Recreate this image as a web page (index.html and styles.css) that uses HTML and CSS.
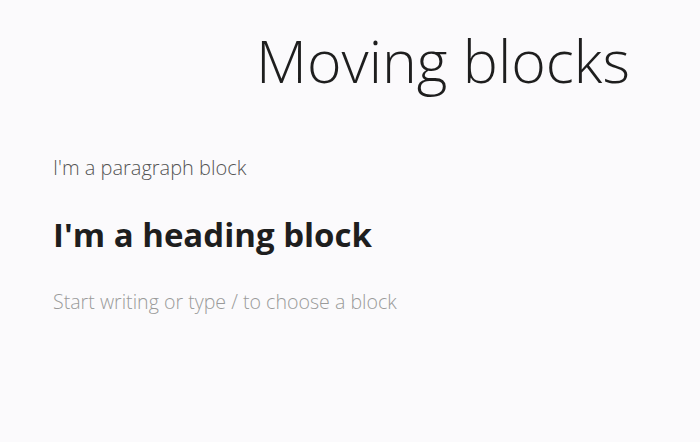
FILE: index.html
```html
<!DOCTYPE html>
<html lang="en">
<head>
    <meta charset="UTF-8">
    <meta name="viewport" content="width=device-width, initial-scale=1.0">
    <title>Moving blocks</title>
    <link rel="stylesheet" href="styles.css">
</head>
<body>

<div class="editor">
    <h1 class="post-title">Moving blocks</h1>

    <div class="blocks">
        <p class="block paragraph">I'm a paragraph block</p>
        <h2 class="block heading">I'm a heading block</h2>
        <p class="block placeholder">Start writing or type / to choose a block</p>
    </div>
</div>

</body>
</html>
```

FILE: styles.css
```css
body {
    margin: 0;
    background-color: #fbfafc;
    font-family: "Open Sans", Arial, sans-serif;
    color: #1e1e1e;
}
.editor {
    padding: 20px 0 0 0;
}
.post-title {
    margin: 0 0 0 256px;
    font-size: 59px;
    font-weight: 300;
    line-height: 80px;
}
.blocks {
    padding: 53px 0 0 53px;
}
.block {
    margin: 0;
}
.paragraph {
    font-size: 20px;
    font-weight: 300;
    line-height: 30px;
    color: #555;
}
.heading {
    margin-top: 32px;
    font-size: 33px;
    font-weight: 700;
    line-height: 40px;
}
.placeholder {
    margin-top: 32px;
    font-size: 19.6px;
    font-weight: 300;
    line-height: 30px;
    color: #9a9a9a;
}
```
